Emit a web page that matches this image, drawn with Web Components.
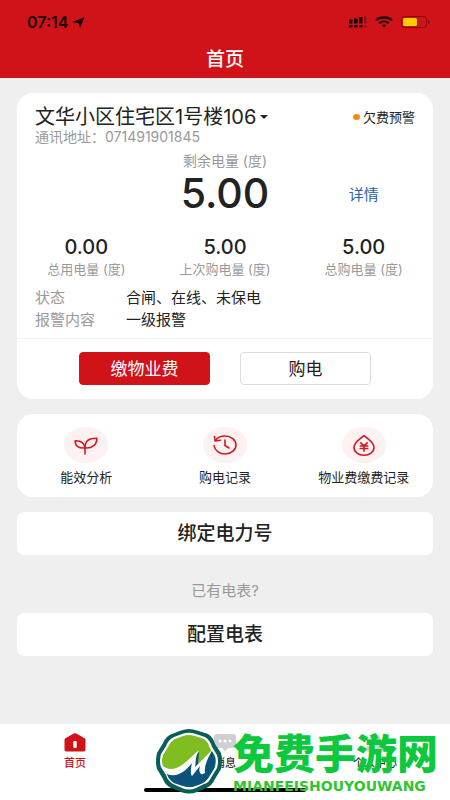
<!DOCTYPE html>
<html lang="zh-CN">
<head>
<meta charset="utf-8">
<meta name="viewport" content="width=device-width, initial-scale=1">
<title>首页</title>
<style>
    body {
        margin: 0;
        background: #efefef;
        color: #222;
        font-family: Inter, "Noto Sans CJK SC", sans-serif;
    }
</style>
</head>
<body>
<power-app></power-app>

<script>
class StatusBar extends HTMLElement {
    constructor() {
        super();
        this.attachShadow({mode: 'open'});
        this.shadowRoot.innerHTML = `
            <style>
                :host {
                    display: flex;
                    justify-content: space-between;
                    align-items: center;
                    height: 44px;
                    padding: 0 20px 0 27px;
                    color: #1a0505;
                    font-size: 16px;
                    font-weight: 600;
                }
                div {
                    display: flex;
                    align-items: center;
                    gap: 4px;
                }
                .icons {
                    gap: 8px;
                }
                svg {
                    display: block;
                }
            </style>
            <div>
                <span>07:14</span>
                <svg width="13" height="11" viewBox="0 0 13 11"><path d="M12.500 .3 8 10.700 6.600 6.200 .3 5Z" fill="currentColor"/></svg>
            </div>
            <div class="icons">
                <svg width="18" height="12" viewBox="0 0 18 12" fill="currentColor">
                    <path d="M0 3.500h3.500v4H0zM5 2.500h3.500v5H5zM10 1h3.500v6.500H10zM0 9h3.500v2.500H0zM5 9h3.500v2.500H5zM10 9h3.500v2.500H10z"/>
                    <path d="M15 0h2.500v7.500H15zM15 9h2.500v2.500H15z" opacity=".3"/>
                </svg>
                <svg width="18" height="12" viewBox="0 0 18 12" fill="none" stroke="currentColor">
                    <path d="M1 4.300C5.500 .3 12.500 .3 17 4.300" stroke-width="2.200"/>
                    <path d="M4.200 7.300C7 4.900 11 4.900 13.800 7.300" stroke-width="2"/>
                    <path d="M6.800 9.200C8 8.300 10 8.300 11.200 9.200L9 11.400Z" fill="currentColor" stroke="none"/>
                </svg>
                <svg width="29" height="12" viewBox="0 0 29 12">
                    <rect x=".5" y=".5" width="25" height="11" rx="3" fill="none" stroke="#7d0b10"/>
                    <rect x="2" y="2" width="14" height="8" rx="1.500" fill="#ffcd05"/>
                    <path d="M27 4v4c2-.6 2-3.400 0-4z" fill="#7d0b10"/>
                </svg>
            </div>`;
    }
}

class PageHeader extends HTMLElement {
    constructor() {
        super();
        this.attachShadow({mode: 'open'});
        this.shadowRoot.innerHTML = `
            <style>
                :host {
                    display: block;
                    background: #d01219;
                }
                h1 {
                    margin: 0;
                    padding-bottom: 2px;
                    color: #fff;
                    font-size: 19px;
                    font-weight: 500;
                    line-height: 32px;
                    text-align: center;
                }
            </style>
            <status-bar></status-bar>
            <h1><slot></slot></h1>`;
    }
}

class UiCard extends HTMLElement {
    constructor() {
        super();
        this.attachShadow({mode: 'open'});
        this.shadowRoot.innerHTML = `
            <style>
                :host {
                    display: block;
                    background: #fff;
                    border-radius: 16px;
                }
            </style>
            <slot></slot>`;
    }
}

class UiButton extends HTMLElement {
    constructor() {
        super();
        this.attachShadow({mode: 'open'});
        this.shadowRoot.innerHTML = `
            <style>
                :host {
                    display: block;
                }
                button {
                    box-sizing: border-box;
                    width: 100%;
                    height: 33px;
                    padding: 0;
                    border: 1px solid #ddd;
                    border-radius: 4px;
                    background: #fff;
                    color: #222;
                    font: inherit;
                    font-size: 17px;
                    line-height: 24px;
                    cursor: pointer;
                }
                :host([kind="primary"]) button {
                    border-color: #d01219;
                    background: #d01219;
                    color: #fff;
                }
                :host([kind="block"]) button {
                    height: 43px;
                    border: 0;
                    border-radius: 7px;
                    font-size: 19px;
                    font-weight: 500;
                }
            </style>
            <button type="button"><slot></slot></button>`;
    }
}

class StatItem extends HTMLElement {
    constructor() {
        super();
        this.attachShadow({mode: 'open'});
        this.shadowRoot.innerHTML = `
            <style>
                :host {
                    display: block;
                    text-align: center;
                }
                .value {
                    font-size: 20px;
                    font-weight: 500;
                    line-height: 24px;
                }
                .label {
                    color: #999;
                    font-size: 13px;
                    line-height: 20px;
                    white-space: nowrap;
                }
            </style>
            <div class="value">${this.getAttribute('value')}</div>
            <div class="label"><slot></slot></div>`;
    }
}

class MeterCard extends HTMLElement {
    constructor() {
        super();
        this.attachShadow({mode: 'open'});
        this.shadowRoot.innerHTML = `
            <style>
                :host {
                    display: block;
                }
                .top {
                    display: flex;
                    justify-content: space-between;
                    align-items: center;
                    padding: 12px 18px 0;
                }
                .picker {
                    display: grid;
                    align-items: center;
                }
                .picker > * {
                    grid-area: 1 / 1;
                }
                .picker svg {
                    justify-self: end;
                    pointer-events: none;
                }
                select {
                    appearance: none;
                    field-sizing: content;
                    height: 24px;
                    margin: 0;
                    padding: 0 12px 0 0;
                    border: 0;
                    background: none;
                    color: inherit;
                    font: inherit;
                    font-size: 20px;
                    line-height: 24px;
                }
                .warn {
                    display: flex;
                    align-items: center;
                    gap: 3px;
                    font-size: 13px;
                    line-height: 20px;
                }
                .warn::before {
                    content: "";
                    width: 7px;
                    height: 6px;
                    border-radius: 50%;
                    background: #f88a0c;
                }
                .address {
                    margin: 0;
                    padding: 0 18px;
                    color: #999;
                    font-size: 14px;
                    line-height: 16px;
                }
                .balance, .stats {
                    display: grid;
                    grid-template-columns: repeat(3, 1fr);
                    align-items: center;
                    text-align: center;
                }
                .balance {
                    margin-top: 6px;
                }
                .balance .label {
                    grid-column: 1 / 4;
                    color: #999;
                    font-size: 14px;
                    line-height: 20px;
                }
                .balance .amount {
                    grid-column: 2;
                    font-size: 41px;
                    font-weight: 500;
                    line-height: 44px;
                }
                a {
                    color: #2a62a5;
                    font-size: 15px;
                    text-decoration: none;
                }
                .stats {
                    margin-top: 20px;
                }
                dl {
                    display: grid;
                    grid-template-columns: 91px 1fr;
                    margin: 8px 0 0;
                    padding: 0 18px 7px;
                    border-bottom: 1px solid #f2f2f2;
                    font-size: 15px;
                    line-height: 22px;
                }
                dt {
                    color: #999;
                }
                dd {
                    margin: 0;
                }
                .actions {
                    display: grid;
                    grid-template-columns: 1fr 1fr;
                    gap: 30px;
                    padding: 13px 62px 14px;
                }
            </style>
            <ui-card>
                <div class="top">
                    <div class="picker">
                        <select aria-label="房屋"><option>文华小区住宅区1号楼106</option></select>
                        <svg width="8" height="4" viewBox="0 0 8 4"><path d="M0 0h8L4 4z" fill="#222"/></svg>
                    </div>
                    <span class="warn">欠费预警</span>
                </div>
                <p class="address">通讯地址：071491901845</p>
                <div class="balance">
                    <span class="label">剩余电量 (度)</span>
                    <span class="amount">5.00</span>
                    <span><a href="#detail">详情</a></span>
                </div>
                <div class="stats">
                    <stat-item value="0.00">总用电量 (度)</stat-item>
                    <stat-item value="5.00">上次购电量 (度)</stat-item>
                    <stat-item value="5.00">总购电量 (度)</stat-item>
                </div>
                <dl>
                    <dt>状态</dt><dd>合闸、在线、未保电</dd>
                    <dt>报警内容</dt><dd>一级报警</dd>
                </dl>
                <div class="actions">
                    <ui-button kind="primary">缴物业费</ui-button>
                    <ui-button>购电</ui-button>
                </div>
            </ui-card>`;
    }
}

class QuickLink extends HTMLElement {
    constructor() {
        super();
        this.attachShadow({mode: 'open'});
        this.shadowRoot.innerHTML = `
            <style>
                :host {
                    display: block;
                }
                a {
                    display: flex;
                    flex-direction: column;
                    align-items: center;
                    gap: 4px;
                    padding: 13px 0 10px;
                    color: #222;
                    font-size: 13px;
                    line-height: 20px;
                    text-decoration: none;
                    white-space: nowrap;
                }
                .icon {
                    display: grid;
                    place-items: center;
                    width: 44px;
                    height: 36px;
                    border-radius: 50%;
                    background: #fdf1f1;
                }
            </style>
            <a href="#${this.getAttribute('to')}">
                <span class="icon"><slot name="icon"></slot></span>
                <slot></slot>
            </a>`;
    }
}

class QuickLinks extends HTMLElement {
    constructor() {
        super();
        this.attachShadow({mode: 'open'});
        this.shadowRoot.innerHTML = `
            <style>
                :host {
                    display: block;
                }
                nav {
                    display: grid;
                    grid-template-columns: repeat(3, 1fr);
                }
                svg {
                    display: block;
                    fill: none;
                    stroke: #cf1a22;
                    stroke-width: 1.600;
                    stroke-linecap: round;
                    stroke-linejoin: round;
                }
            </style>
            <ui-card>
                <nav>
                    <quick-link to="analysis">
                        <svg slot="icon" width="24" height="20" viewBox="0 0 24 20">
                            <path d="M11 19V13"/>
                            <path d="M11 13C4 13.300 1 10.500 1.200 5.800 6.500 5.600 10.300 7.500 11 13Z"/>
                            <path d="M11 13C11 6 14.500 3.200 22.800 3.300 23 9.500 18.500 13.500 11 13Z"/>
                        </svg>
                        能效分析
                    </quick-link>
                    <quick-link to="purchases">
                        <svg slot="icon" width="24" height="20" viewBox="0 0 24 20">
                            <path d="M3 4.800C5 2.200 8.200 1 12 1c6 0 11 4 11 9s-5 9-11 9c-5.500 0-10.300-3.500-11-8.500"/>
                            <path d="M1.500 1.500 2 6l5.500-.8"/>
                            <path d="M12 5v5.500l4 2.500"/>
                        </svg>
                        购电记录
                    </quick-link>
                    <quick-link to="payments">
                        <svg slot="icon" width="22" height="21" viewBox="0 0 22 21">
                            <path d="M9.600 1.600Q11 .3 12.400 1.600C16 5 21 7.500 21 12.500 21 17 16.500 20.200 11 20.200S1 17 1 12.500C1 7.500 6 5 9.600 1.600Z"/>
                            <path d="M7.800 7.800 11 10.800l3.200-3M7.200 11h7.600M7.200 13.500h7.600M11 10.800v5.400"/>
                        </svg>
                        物业费缴费记录
                    </quick-link>
                </nav>
            </ui-card>`;
    }
}

class TabBar extends HTMLElement {
    constructor() {
        super();
        this.attachShadow({mode: 'open'});
        this.shadowRoot.innerHTML = `
            <style>
                :host {
                    display: block;
                    position: relative;
                    background: #fff;
                }
                nav {
                    display: grid;
                    grid-template-columns: repeat(3, 1fr);
                    padding-top: 9px;
                }
                a {
                    display: flex;
                    flex-direction: column;
                    align-items: center;
                    gap: 2px;
                    color: #333;
                    font-size: 11px;
                    font-weight: 500;
                    line-height: 18px;
                    text-decoration: none;
                }
                a[aria-current] {
                    color: #d01219;
                }
                .indicator {
                    width: 36%;
                    height: 4px;
                    margin: 16px auto 0;
                    border-radius: 2px;
                    background: #000;
                }
                :host::after {
                    content: "";
                    display: block;
                    height: 8px;
                }
            </style>
            <nav>
                <a href="#home" aria-current="page">
                    <svg width="22" height="19" viewBox="0 0 22 19">
                        <path d="M9.800 .6Q11 0 12.200 .6L20.600 5.200Q21.500 5.800 21.500 6.800V16.500Q21.500 18.500 19.500 18.500H2.500Q.5 18.500 .5 16.500V6.800Q.5 5.800 1.400 5.200Z" fill="#d01219"/>
                        <rect x="9.300" y="8" width="3.400" height="7" rx="1" fill="#fff"/>
                    </svg>
                    首页
                </a>
                <a href="#messages">
                    <svg width="22" height="19" viewBox="0 0 22 19">
                        <path d="M3 1h16q3 0 3 3v8q0 3-3 3h-5l-3 3.500L8 15H3q-3 0-3-3V4q0-3 3-3z" fill="#d0cfd4"/>
                        <g fill="#fff"><circle cx="6" cy="8" r="1.500"/><circle cx="11" cy="8" r="1.500"/><circle cx="16" cy="8" r="1.500"/></g>
                    </svg>
                    消息
                </a>
                <a href="#me">
                    <svg width="22" height="19" viewBox="0 0 22 19" fill="#d0cfd4">
                        <ellipse cx="11" cy="6" rx="5.500" ry="5"/>
                        <path d="M1 18.500c0-5 4-7 10-7s10 2 10 7z"/>
                    </svg>
                    个人中心
                </a>
            </nav>
            <div class="indicator"></div>
            <slot></slot>`;
    }
}

class SiteMark extends HTMLElement {
    constructor() {
        super();
        this.attachShadow({mode: 'open'});
        this.shadowRoot.innerHTML = `
            <style>
                /* floats over the tab bar */
                :host {
                    position: absolute;
                    right: 12px;
                    bottom: 6px;
                    display: flex;
                    align-items: center;
                    gap: 10px;
                    color: #0cc83c;
                    pointer-events: none;
                }
                svg {
                    display: block;
                }
                .name {
                    margin-bottom: 4px;
                    font-family: "Noto Sans CJK SC", sans-serif;
                    font-size: 41px;
                    font-weight: 900;
                    line-height: 46px;
                }
                .latin {
                    color: #2fc52f;
                    font-family: "DejaVu Sans", sans-serif;
                    font-size: 14px;
                    font-weight: 700;
                    line-height: 16px;
                }
            </style>
            <svg width="68" height="66" viewBox="0 0 68 66">
                <path d="M26 2.500Q34-.5 42 2.500L53 6Q58 9 60 16L66 25Q68 33 66 41L60 51Q57 58 51 60L42 64Q34 67 26 64L16 60Q10 57 8 51L2 41Q0 33 2 25L8 15Q11 8 17 6Z" fill="#075e5a"/>
                <path d="M27 6Q34 3.500 41 6L50 9Q55 12 57 19L62 27Q64 33 62 40L57 48Q54 55 49 56L41 60Q34 63 27 60L18 56Q13 53 11 47L6 39Q4 33 6 26L11 18Q14 11 19 9Z" fill="#fff"/>
                <path d="M28 8Q34 6 40 8L49 11Q53 14 55 20L60 28Q62 33 60 39L55 47Q52 53 47 55L40 58Q34 60 28 58L19 55Q14 52 12 46L8 38Q6 33 8 27L13 19Q16 13 20 11Z" fill="#7fbd21"/>
                <path d="M12 46C22 47 30 42 36 32L44 24 43 36 57 23 60 29Q61 35 59 41L54 49Q51 54 46 56L39 58.500Q34 60 28 58L19 55Q14 52 12 46Z" fill="#0b537b"/>
                <path d="M8 38C13 43 22 41 27 37 34 32 38 27 44 22 40 29 41 35 40 39L58 21C52 31 49 39 50 45 46 48 43 45 45 38L37 48C35 46 36 39 37 35 31 43 22 50 12 46Z" fill="#fff"/>
            </svg>
            <div>
                <div class="name">免费手游网</div>
                <div class="latin">MIANFEISHOUYOUWANG</div>
            </div>`;
    }
}

class PowerApp extends HTMLElement {
    constructor() {
        super();
        this.attachShadow({mode: 'open'});
        this.shadowRoot.innerHTML = `
            <style>
                :host {
                    display: flex;
                    flex-direction: column;
                    min-height: 100vh;
                }
                main {
                    display: flex;
                    flex: 1;
                    flex-direction: column;
                    gap: 15px;
                    padding: 15px 17px;
                }
                .bind {
                    display: grid;
                    gap: 26px;
                }
                p {
                    margin: 0;
                    color: #999;
                    font-size: 15px;
                    line-height: 20px;
                    text-align: center;
                }
                .config {
                    display: grid;
                    gap: 12px;
                }
            </style>
            <page-header>首页</page-header>
            <main>
                <meter-card></meter-card>
                <quick-links></quick-links>
                <div class="bind">
                    <ui-button kind="block">绑定电力号</ui-button>
                    <div class="config">
                        <p>已有电表?</p>
                        <ui-button kind="block">配置电表</ui-button>
                    </div>
                </div>
            </main>
            <tab-bar><site-mark></site-mark></tab-bar>`;
    }
}

customElements.define('status-bar', StatusBar);
customElements.define('page-header', PageHeader);
customElements.define('ui-card', UiCard);
customElements.define('ui-button', UiButton);
customElements.define('stat-item', StatItem);
customElements.define('meter-card', MeterCard);
customElements.define('quick-link', QuickLink);
customElements.define('quick-links', QuickLinks);
customElements.define('tab-bar', TabBar);
customElements.define('site-mark', SiteMark);
customElements.define('power-app', PowerApp);
</script>
</body>
</html>
